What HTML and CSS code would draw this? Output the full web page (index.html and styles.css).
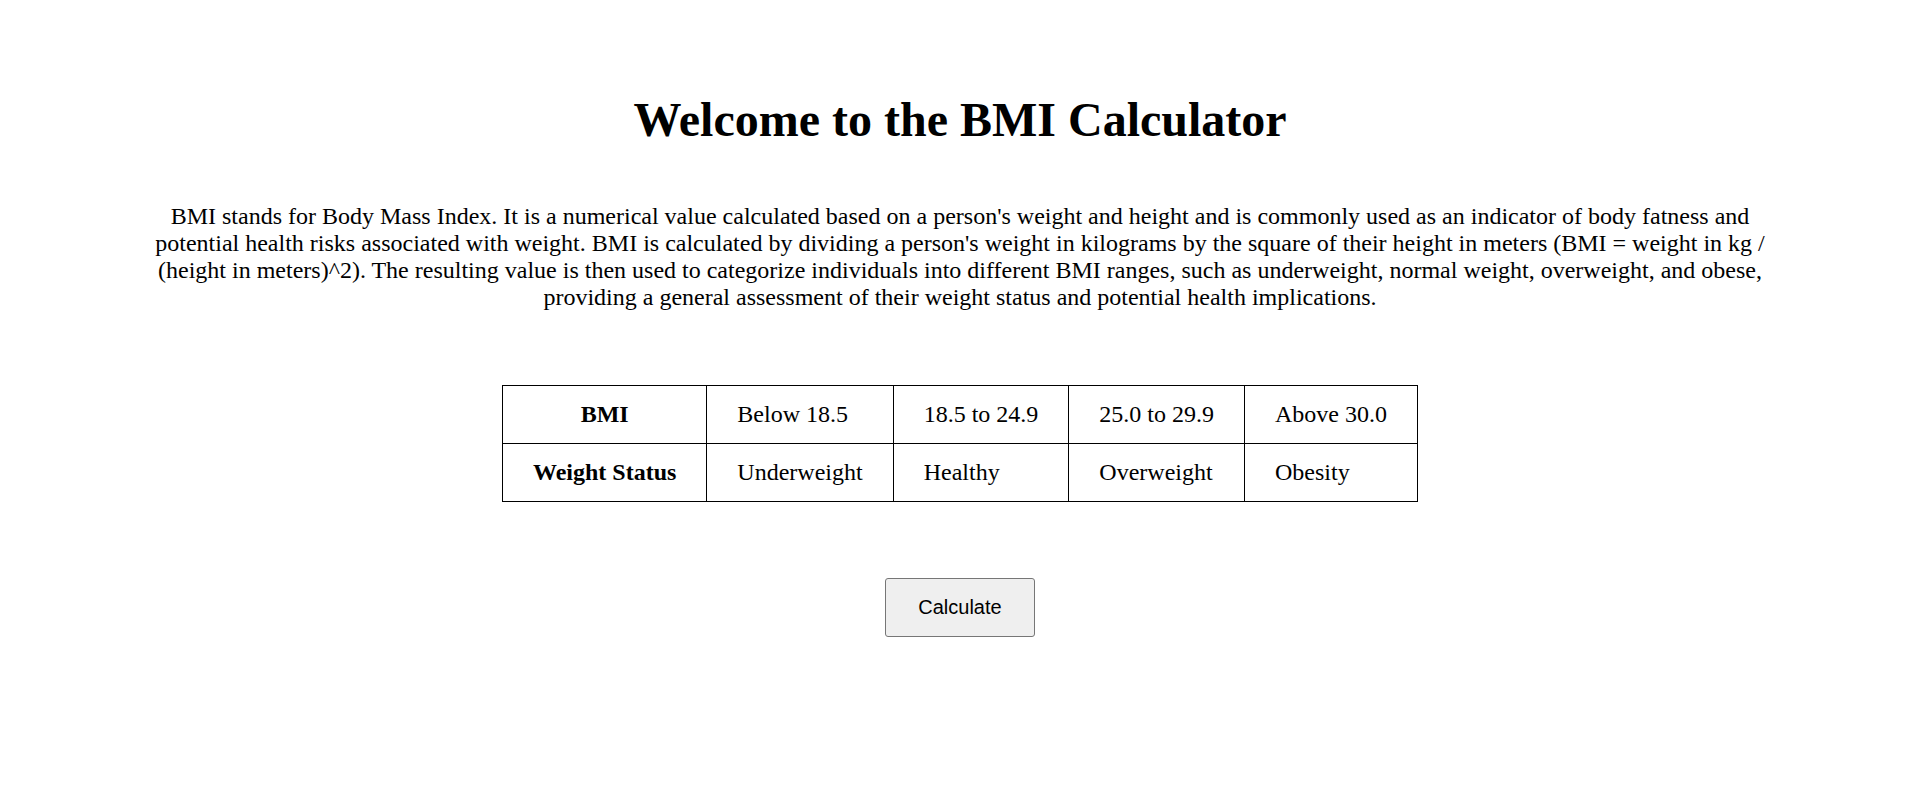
FILE: index.html
```html
<!DOCTYPE html>
<html lang="en">
<head>
<meta charset="utf-8">
<title>BMI Calculator</title>
<link rel="stylesheet" href="styles.css">
</head>
<body>
<main class="page">
  <h1 class="title">Welcome to the BMI Calculator</h1>
  <p class="intro">BMI stands for Body Mass Index. It is a numerical value calculated based on a person's weight and height and is commonly used as an indicator of body fatness and potential health risks associated with weight. BMI is calculated by dividing a person's weight in kilograms by the square of their height in meters (BMI = weight in kg / (height in meters)^2). The resulting value is then used to categorize individuals into different BMI ranges, such as underweight, normal weight, overweight, and obese, providing a general assessment of their weight status and potential health implications.</p>
  <table class="bmi-table">
    <tr>
      <th>BMI</th>
      <td>Below 18.5</td>
      <td>18.5 to 24.9</td>
      <td>25.0 to 29.9</td>
      <td>Above 30.0</td>
    </tr>
    <tr>
      <th>Weight Status</th>
      <td>Underweight</td>
      <td>Healthy</td>
      <td>Overweight</td>
      <td>Obesity</td>
    </tr>
  </table>
  <div class="actions">
    <button class="calc-btn" type="button">Calculate</button>
  </div>
</main>
</body>
</html>
```

FILE: styles.css
```css
html, body {
  margin: 0;
  padding: 0;
  background: #ffffff;
  color: #000000;
}

body {
  font-family: "Liberation Serif", "Times New Roman", serif;
  font-size: 24px;
}

.page {
  padding-top: 92px;
  text-align: center;
}

.title {
  margin: 0 0 56px;
  font-size: 48px;
  font-weight: bold;
  line-height: normal;
}

.intro {
  width: 1630px;
  margin: 0 auto 74px;
  line-height: normal;
}

.bmi-table {
  margin: 0 auto 76px;
  border-collapse: collapse;
  font-size: 24px;
}

.bmi-table th,
.bmi-table td {
  border: 1px solid #000;
  padding: 15px 30px;
  line-height: 27px;
}

.bmi-table th {
  text-align: center;
  font-weight: bold;
}

.bmi-table td {
  text-align: left;
}

.actions {
  display: flex;
  justify-content: center;
}

.calc-btn {
  font-family: "Liberation Sans", Arial, sans-serif;
  font-size: 20px;
  padding: 17px 32px;
  background: #efefef;
  color: #000;
  border: 1px solid #767676;
  border-radius: 3px;
  line-height: 23px;
}
```
